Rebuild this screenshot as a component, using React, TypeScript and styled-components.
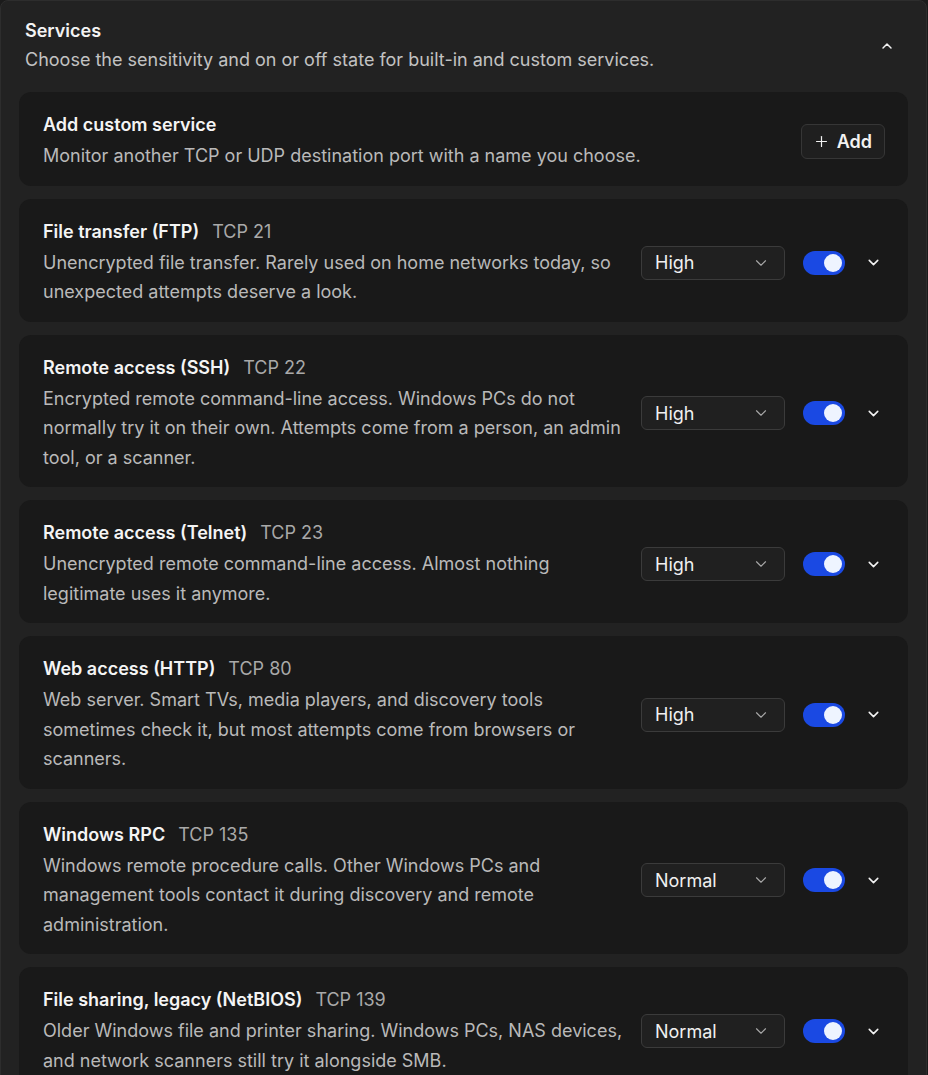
import React, { useState } from "react";
import styled, { createGlobalStyle } from "styled-components";
import { ChevronDown, ChevronUp, Plus } from "lucide-react";

type Sensitivity = "High" | "Normal" | "Low";

interface Service {
  id: string;
  name: string;
  port: string;
  description: string;
  sensitivity: Sensitivity;
  enabled: boolean;
}

const services: Service[] = [
  {
    id: "ftp",
    name: "File transfer (FTP)",
    port: "TCP 21",
    description:
      "Unencrypted file transfer. Rarely used on home networks today, so unexpected attempts deserve a look.",
    sensitivity: "High",
    enabled: true,
  },
  {
    id: "ssh",
    name: "Remote access (SSH)",
    port: "TCP 22",
    description:
      "Encrypted remote command-line access. Windows PCs do not normally try it on their own. Attempts come from a person, an admin tool, or a scanner.",
    sensitivity: "High",
    enabled: true,
  },
  {
    id: "telnet",
    name: "Remote access (Telnet)",
    port: "TCP 23",
    description:
      "Unencrypted remote command-line access. Almost nothing legitimate uses it anymore.",
    sensitivity: "High",
    enabled: true,
  },
  {
    id: "http",
    name: "Web access (HTTP)",
    port: "TCP 80",
    description:
      "Web server. Smart TVs, media players, and discovery tools sometimes check it, but most attempts come from browsers or scanners.",
    sensitivity: "High",
    enabled: true,
  },
  {
    id: "rpc",
    name: "Windows RPC",
    port: "TCP 135",
    description:
      "Windows remote procedure calls. Other Windows PCs and management tools contact it during discovery and remote administration.",
    sensitivity: "Normal",
    enabled: true,
  },
  {
    id: "netbios",
    name: "File sharing, legacy (NetBIOS)",
    port: "TCP 139",
    description:
      "Older Windows file and printer sharing. Windows PCs, NAS devices, and network scanners still try it alongside SMB.",
    sensitivity: "Normal",
    enabled: true,
  },
];

const GlobalStyle = createGlobalStyle`
  html, body {
    margin: 0;
    background: #1b1b1b;
    font-family: Inter, "Noto Sans", sans-serif;
    -webkit-font-smoothing: antialiased;
  }
  * { box-sizing: border-box; }
`;

export default function App() {
  const [enabled, setEnabled] = useState<Record<string, boolean>>(
    Object.fromEntries(services.map((s) => [s.id, s.enabled]))
  );

  return (
    <>
      <GlobalStyle />
      <Panel>
        <Header>
          <HeaderText>
            <PanelTitle>Services</PanelTitle>
            <PanelSubtitle>
              Choose the sensitivity and on or off state for built-in and custom services.
            </PanelSubtitle>
          </HeaderText>
          <IconButton aria-label="Collapse">
            <ChevronUp size={16} strokeWidth={2.2} />
          </IconButton>
        </Header>

        <CardList>
          <Card>
            <CardText>
              <CardTitleRow>
                <CardTitle>Add custom service</CardTitle>
              </CardTitleRow>
              <CardDescription>
                Monitor another TCP or UDP destination port with a name you choose.
              </CardDescription>
            </CardText>
            <AddButton>
              <Plus size={17} strokeWidth={1.7} />
              Add
            </AddButton>
          </Card>

          {services.map((s) => (
            <Card key={s.id}>
              <CardText>
                <CardTitleRow>
                  <CardTitle>{s.name}</CardTitle>
                  <Port>{s.port}</Port>
                </CardTitleRow>
                <CardDescription>{s.description}</CardDescription>
              </CardText>
              <Controls>
                <Select>
                  <span>{s.sensitivity}</span>
                  <ChevronDown size={18} strokeWidth={1.5} color="#a8a8a8" />
                </Select>
                <Toggle
                  $on={enabled[s.id]}
                  onClick={() => setEnabled((e) => ({ ...e, [s.id]: !e[s.id] }))}
                  aria-label="Toggle service"
                >
                  <Knob $on={enabled[s.id]} />
                </Toggle>
                <ExpandButton aria-label="Expand">
                  <ChevronDown size={17} strokeWidth={2.2} />
                </ExpandButton>
              </Controls>
            </Card>
          ))}
        </CardList>
      </Panel>
    </>
  );
}

const Panel = styled.section`
  width: 927px;
  min-height: 1100px;
  background: #222222;
  border: 1px solid #2d2d2d;
  border-radius: 8px;
  padding: 18px 18px 0;
`;

const Header = styled.div`
  display: flex;
  align-items: center;
  justify-content: space-between;
  padding: 0 9px 0 6px;
`;

const HeaderText = styled.div`
  display: flex;
  flex-direction: column;
`;

const PanelTitle = styled.h2`
  margin: 0;
  font-size: 18px;
  line-height: 24px;
  font-weight: 600;
  color: #f3f3f3;
`;

const PanelSubtitle = styled.p`
  margin: 4px 0 0;
  font-size: 18px;
  line-height: 26px;
  color: #c2c2c2;
`;

const IconButton = styled.button`
  display: flex;
  align-items: center;
  justify-content: center;
  width: 24px;
  height: 24px;
  padding: 0;
  border: none;
  background: none;
  color: #f2f2f2;
  cursor: pointer;
`;

const ExpandButton = styled(IconButton)`
  margin-left: -2px;
`;

const CardList = styled.div`
  display: flex;
  flex-direction: column;
  gap: 13px;
  margin-top: 19px;
`;

const Card = styled.div`
  display: flex;
  align-items: center;
  gap: 14px;
  background: #191919;
  border-radius: 12px;
  padding: 20px 23px 15px 24px;
`;

const CardText = styled.div`
  flex: 1;
  min-width: 0;
`;

const CardTitleRow = styled.div`
  display: flex;
  align-items: baseline;
  gap: 13px;
`;

const CardTitle = styled.h3`
  margin: 0;
  font-size: 18px;
  line-height: 25px;
  font-weight: 600;
  color: #f4f4f4;
`;

const Port = styled.span`
  font-size: 18px;
  line-height: 25px;
  color: #a9a9a9;
`;

const CardDescription = styled.p`
  margin: 4px 0 0;
  font-size: 18px;
  line-height: 29.5px;
  color: #b9b9b9;
`;

const Controls = styled.div`
  display: flex;
  align-items: center;
  gap: 18px;
  flex-shrink: 0;
`;

const Select = styled.div`
  display: flex;
  align-items: center;
  justify-content: space-between;
  width: 144px;
  height: 34px;
  padding: 0 14px 0 13px;
  background: #202020;
  border: 1px solid #3b3b3b;
  border-radius: 6px;
  font-size: 18px;
  color: #f0f0f0;
`;

const Toggle = styled.button<{ $on: boolean }>`
  position: relative;
  width: 42px;
  height: 24px;
  padding: 0;
  border: none;
  border-radius: 12px;
  background: ${(p) => (p.$on ? "#1a49e3" : "#3a3a3a")};
  cursor: pointer;
`;

const Knob = styled.span<{ $on: boolean }>`
  position: absolute;
  top: 3px;
  left: ${(p) => (p.$on ? "21px" : "3px")};
  width: 18px;
  height: 18px;
  border-radius: 50%;
  background: #eef4ff;
`;

const AddButton = styled.button`
  display: flex;
  align-items: center;
  gap: 7px;
  height: 35px;
  padding: 0 12px 0 11px;
  background: #1f1f1f;
  border: 1px solid #363636;
  border-radius: 6px;
  font-family: inherit;
  font-size: 18px;
  font-weight: 600;
  color: #f2f2f2;
  cursor: pointer;
`;
